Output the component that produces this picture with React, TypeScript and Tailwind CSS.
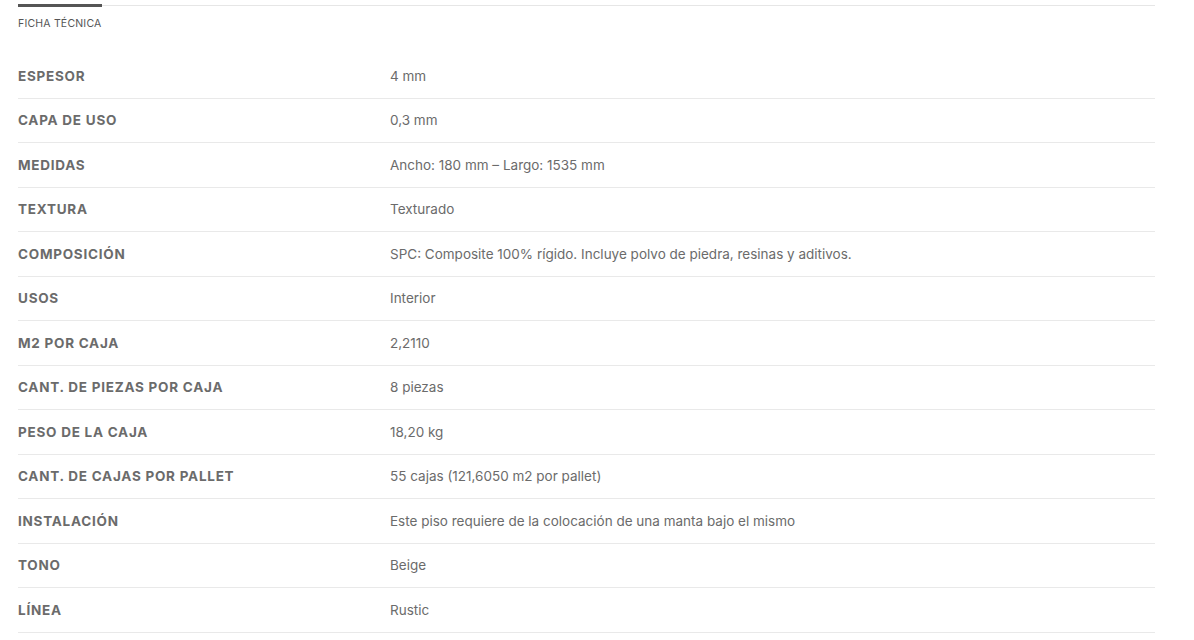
import React from "react";

type Spec = { label: string; value: string };

const specs: Spec[] = [
  { label: "ESPESOR", value: "4 mm" },
  { label: "CAPA DE USO", value: "0,3 mm" },
  { label: "MEDIDAS", value: "Ancho: 180 mm – Largo: 1535 mm" },
  { label: "TEXTURA", value: "Texturado" },
  { label: "COMPOSICIÓN", value: "SPC: Composite 100% rígido. Incluye polvo de piedra, resinas y aditivos." },
  { label: "USOS", value: "Interior" },
  { label: "M2 POR CAJA", value: "2,2110" },
  { label: "CANT. DE PIEZAS POR CAJA", value: "8 piezas" },
  { label: "PESO DE LA CAJA", value: "18,20 kg" },
  { label: "CANT. DE CAJAS POR PALLET", value: "55 cajas (121,6050 m2 por pallet)" },
  { label: "INSTALACIÓN", value: "Este piso requiere de la colocación de una manta bajo el mismo" },
  { label: "TONO", value: "Beige" },
  { label: "LÍNEA", value: "Rustic" },
];

export default function App() {
  return (
    <div className="min-h-[640px] bg-white pl-[18px] pr-[39px] pt-[5px] font-['Inter',sans-serif] text-[#6b6b6b]">
      {/* Tabs */}
      <div className="border-t border-[#e6e6e6]">
        <div className="-mt-[2px] w-[84px] border-t-[3px] border-[#555555] pt-[10px] text-[10.5px] leading-[14px] tracking-[0.2px] text-[#555555]">
          FICHA TÉCNICA
        </div>
      </div>

      {/* Spec table */}
      <div className="mt-[23px]">
        {specs.map((s) => (
          <div
            key={s.label}
            className="flex h-[44.5px] items-center border-b border-[#e9e9e9]"
          >
            <div className="w-[372px] shrink-0 text-[13.5px] font-bold tracking-[0.75px] text-[#6b6b6b]">{s.label}</div>
            <div className="text-[13.5px] text-[#6b6b6b]">{s.value}</div>
          </div>
        ))}
      </div>
    </div>
  );
}
